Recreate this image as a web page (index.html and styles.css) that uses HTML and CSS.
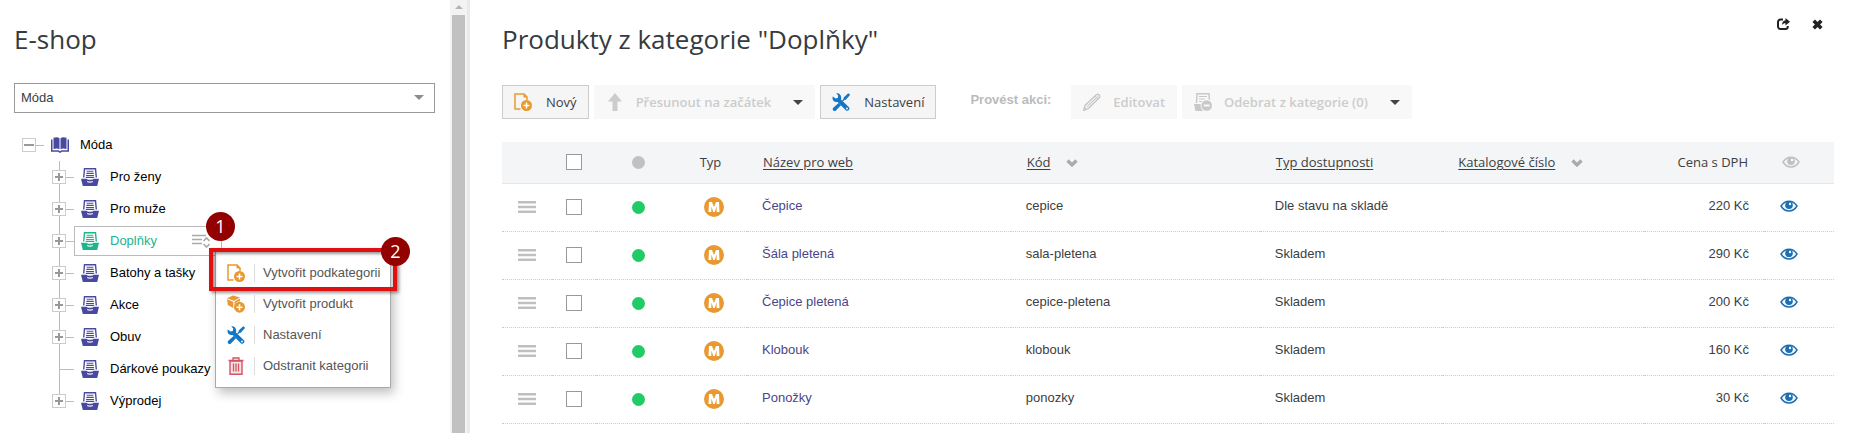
FILE: index.html
```html
<!DOCTYPE html>
<html lang="cs">
<head>
<meta charset="utf-8">
<title>E-shop</title>
<link rel="stylesheet" href="styles.css">
</head>
<body>
<svg class="defs" aria-hidden="true">
  <symbol id="i-new" viewBox="0 0 18 18"><path d="M6.500 16H1V1h9l3 3v3" fill="none" stroke="#e8992f" stroke-width="1.500"/><path d="M9.500.5v4h4z" fill="#e8992f"/><circle cx="12.500" cy="12.500" r="5.500" fill="#e8992f"/><path d="M12.500 9.500v6M9.500 12.500h6" stroke="#fff" stroke-width="1.500"/></symbol>
  <symbol id="i-box" viewBox="0 0 18 18"><path d="M0 3.200 6 .5l7 2-6 3.200z M0 4.300l6.300 2.400v6.300L.8 10z M7.500 6.500 13 3.600v2.600a6 6 0 0 0-5.500 4z" fill="#e8992f"/><circle cx="12.500" cy="12.200" r="5.500" fill="#e8992f"/><path d="M12.500 9.200v6M9.500 12.200h6" stroke="#fff" stroke-width="1.500"/></symbol>
  <symbol id="i-tools" viewBox="0 0 18 18"><path d="M4.200.3 6.200 2.600 5.800 5 3.600 5.400.8 3.600C-.4 7 2.400 9.800 5.600 8.900l8.200 8.300c2 1.600 4.800-.8 3.200-3L9 6.500C10 2.300 7.400-.4 4.200.3z" fill="#1277c8"/><path d="M17.400 1 16.200.2l-4.500 4.300-.2 1.400L10 7.200l1 1 1.400-1.300 1.400-.2L18 2z M6.600 10 1.300 14.800a1.800 1.800 0 0 0 2.600 2.600L9 12.300z" fill="#1277c8"/><circle cx="15" cy="15.500" r=".9" fill="#fff"/></symbol>
  <symbol id="i-trash" viewBox="0 0 16 18"><path d="M2 4h12v13.200H2z" fill="#fbe3e5" stroke="#cf5560" stroke-width="1.400"/><path d="M.5 3.500h15M5 3V1h6v2M5.500 6.500v8M8 6.500v8M10.500 6.500v8" fill="none" stroke="#cf5560" stroke-width="1.300"/></symbol>
  <symbol id="i-drawer" viewBox="0 0 18 18"><path d="M2.700 9.500 3.500.7h11l.8 8.800" fill="none" stroke="currentColor" stroke-width="1.400"/><path d="M5.600 3.200h6.800M5.300 5.400h7.400M5 7.600h8M4.800 9.500h8.400" stroke="currentColor" stroke-width="1.100"/><path d="M0 10.800h5.500c.5 1.400 6.500 1.400 7 0H18L16.200 18H1.800z" fill="currentColor"/><path d="M6.200 13.400c1.600.8 4 .8 5.600 0" fill="none" stroke="#fff" stroke-width="1.100"/></symbol>
  <symbol id="i-book" viewBox="0 0 18 16"><path d="M0 2.500h1.500v10.700h6l1.500 1 1.500-1h6V2.500H18v12.200h-7L9 16l-2-1.300H0z" fill="#4a49a0"/><path d="M2.500.8C5 0 7 0 8.500 1.200v11C7 11.200 5 11.200 2.500 12z M15.500.8C13 0 11 0 9.500 1.200v11c1.500-1 3.500-1 6-.2z" fill="#4a49a0"/></symbol>
  <symbol id="i-sort" viewBox="0 0 18 14"><path d="M0 1.500h14M0 5.500h10M0 9.500h10" stroke="#aaa" stroke-width="1.500"/><path d="m11.500 7 3-3 3 3M11.500 10l3 3 3-3" fill="none" stroke="#aaa" stroke-width="1.700"/></symbol>
  <symbol id="i-up" viewBox="0 0 14 18"><path d="M7 0 14 8.500H9.500V18h-5V8.500H0z" fill="#ccc"/></symbol>
  <symbol id="i-pencil" viewBox="0 0 18 18"><path d="M.8 17.200 2 12.400 13.500 1.500c1.500-1.200 4.200 1 3 3L5.500 15.500z" fill="#ececec" stroke="#c6c6c6" stroke-width="1.300"/><path d="M4.500 13.500 14.500 3.500M12 3l3 3" stroke="#c6c6c6"/><path d="M.3 17.700l1-3.700 2.700 2.700z" fill="#c6c6c6"/></symbol>
  <symbol id="i-remove" viewBox="0 0 18 18"><path d="M2.500 10 3 .8h12l.4 6" fill="none" stroke="#c8c8c8" stroke-width="1.500"/><path d="M5 3.500h8M5 6h6M5 8.500h3" stroke="#c8c8c8" stroke-width="1.200"/><path d="M0 11h6.500c0 3 .5 5 2.500 7H1.500z" fill="#c8c8c8"/><circle cx="12.700" cy="12.500" r="5.300" fill="#c8c8c8"/><path d="M9.800 12.500h5.800" stroke="#fff" stroke-width="1.800"/></symbol>
  <symbol id="i-share" viewBox="0 0 13 12"><path d="M6 1.500H3.500a2.500 2.500 0 0 0-2.500 2.500v4.500A2.500 2.500 0 0 0 3.500 11h4.800a2.500 2.500 0 0 0 2.500-2.500V8" fill="none" stroke="#222" stroke-width="2"/><path d="M8.500 0 13 3.800 8.500 7.400V5.200C6.800 5.200 5.800 5.800 5 7.200 5 4.200 6.300 2.400 8.500 2.200z" fill="#222"/></symbol>
  <symbol id="i-close" viewBox="0 0 11 11"><path d="m1.700 1.700 7.600 7.600M9.300 1.700 1.700 9.300" stroke="#222" stroke-width="3.600"/></symbol>
  <symbol id="i-chev" viewBox="0 0 12 8"><path d="m1.500 1.500 4.500 4.500 4.500-4.500" fill="none" stroke="#aaa" stroke-width="3.200"/></symbol>
  <symbol id="i-eye" viewBox="0 0 18 12"><path d="M1 6c4-6.500 12-6.500 16 0-4 6.500-12 6.500-16 0z" fill="none" stroke="currentColor" stroke-width="1.500"/><circle cx="9" cy="5.300" r="3.800" fill="currentColor"/><circle cx="10" cy="4" r="1.200" fill="#fff"/></symbol>
  <symbol id="i-drag" viewBox="0 0 18 12"><path d="M0 1.200h18M0 6h18M0 10.800h18" stroke="#bfbfbf" stroke-width="2.400"/></symbol>
  <symbol id="i-m" viewBox="0 0 20 20"><circle cx="10" cy="10" r="10" fill="#e8992f"/><path d="M4.500 15 5 5h3l2 5 2-5h3l.5 10h-2.800l-.2-5.500L10.800 15H9.200L7.500 9.500 7.300 15z" fill="#fff"/></symbol>
  <symbol id="i-caret" viewBox="0 0 10 5"><path d="M0 0h10L5 5z" fill="currentColor"/></symbol>
</svg>
<div class="app">
  <aside class="sidebar">
    <div class="side-content">
      <h1 class="title">E-shop</h1>
      <div class="picker">
        <select class="shop-select" aria-label="E-shop"><option>Móda</option></select>
        <svg class="picker-caret"><use href="#i-caret"/></svg>
      </div>
      <div class="tree">
        <div class="node"><button class="toggle minus" aria-label="Sbalit"></button><span class="link-line"></span><a class="label root" href="#"><svg class="ic-book"><use href="#i-book"/></svg>Móda</a></div>
        <div class="branch">
          <div class="node"><button class="toggle" aria-label="Rozbalit"></button><span class="link-line"></span><a class="label" href="#"><svg class="ic"><use href="#i-drawer"/></svg>Pro ženy</a></div>
          <div class="node"><button class="toggle" aria-label="Rozbalit"></button><span class="link-line"></span><a class="label" href="#"><svg class="ic"><use href="#i-drawer"/></svg>Pro muže</a></div>
          <div class="node"><button class="toggle" aria-label="Rozbalit"></button><span class="link-line"></span>
            <div class="selected">
              <a class="label" href="#"><svg class="ic"><use href="#i-drawer"/></svg>Doplňky</a>
              <svg class="ic-sort"><use href="#i-sort"/></svg>
              <span class="badge badge-one">1</span>
              <div class="menu">
                <button class="item"><span class="item-icon"><svg class="ic"><use href="#i-new"/></svg></span>Vytvořit podkategorii</button>
                <button class="item"><span class="item-icon"><svg class="ic"><use href="#i-box"/></svg></span>Vytvořit produkt</button>
                <button class="item"><span class="item-icon"><svg class="ic"><use href="#i-tools"/></svg></span>Nastavení</button>
                <button class="item"><span class="item-icon"><svg class="ic"><use href="#i-trash"/></svg></span>Odstranit kategorii</button>
                <span class="highlight"></span>
                <span class="badge badge-two">2</span>
              </div>
            </div>
          </div>
          <div class="node"><button class="toggle" aria-label="Rozbalit"></button><span class="link-line"></span><a class="label" href="#"><svg class="ic"><use href="#i-drawer"/></svg>Batohy a tašky</a></div>
          <div class="node"><button class="toggle" aria-label="Rozbalit"></button><span class="link-line"></span><a class="label" href="#"><svg class="ic"><use href="#i-drawer"/></svg>Akce</a></div>
          <div class="node"><button class="toggle" aria-label="Rozbalit"></button><span class="link-line"></span><a class="label" href="#"><svg class="ic"><use href="#i-drawer"/></svg>Obuv</a></div>
          <div class="node"><span class="leaf-line"></span><a class="label" href="#"><svg class="ic"><use href="#i-drawer"/></svg>Dárkové poukazy</a></div>
          <div class="node"><button class="toggle" aria-label="Rozbalit"></button><span class="link-line"></span><a class="label" href="#"><svg class="ic"><use href="#i-drawer"/></svg>Výprodej</a></div>
        </div>
      </div>
    </div>
    <div class="scrollbar"><svg class="scroll-arrow" viewBox="0 0 8 4"><path d="M0 4h8L4 0z" fill="#b5b5b5"/></svg><div class="thumb"></div></div>
  </aside>
  <main class="main">
    <div class="head">
      <h1 class="title">Produkty z kategorie "Doplňky"</h1>
      <div class="window-actions">
        <button class="plain" aria-label="Otevřít v novém okně"><svg class="ic-share"><use href="#i-share"/></svg></button>
        <button class="plain" aria-label="Zavřít"><svg class="ic-close"><use href="#i-close"/></svg></button>
      </div>
    </div>
    <div class="toolbar">
      <button class="btn"><svg class="ic"><use href="#i-new"/></svg>Nový</button>
      <button class="btn off"><svg class="ic"><use href="#i-up"/></svg>Přesunout na začátek<svg class="caret"><use href="#i-caret"/></svg></button>
      <button class="btn"><svg class="ic"><use href="#i-tools"/></svg>Nastavení</button>
      <span class="bulk">Provést akci:</span>
      <button class="btn off"><svg class="ic"><use href="#i-pencil"/></svg>Editovat</button>
      <button class="btn off"><svg class="ic"><use href="#i-remove"/></svg>Odebrat z kategorie (0)<svg class="caret"><use href="#i-caret"/></svg></button>
    </div>
    <table class="grid">
      <colgroup><col class="c-drag"><col class="c-check"><col class="c-status"><col class="c-type"><col class="c-name"><col class="c-code"><col class="c-avail"><col><col class="c-price"><col class="c-eye"></colgroup>
      <thead><tr>
        <th></th><th class="mid"><input type="checkbox" class="check" aria-label="Vybrat vše"></th><th class="mid"><span class="dot gray"></span></th><th class="mid type-head">Typ</th>
        <th><a href="#">Název pro web</a></th><th><a href="#">Kód</a><svg class="chev"><use href="#i-chev"/></svg></th><th><a href="#">Typ dostupnosti</a></th><th><a href="#">Katalogové číslo</a><svg class="chev"><use href="#i-chev"/></svg></th><th class="num">Cena s DPH</th><th class="eye-head"><svg class="eye muted"><use href="#i-eye"/></svg></th>
      </tr></thead>
      <tbody>
        <tr><td class="mid"><svg class="drag"><use href="#i-drag"/></svg></td><td class="mid"><input type="checkbox" class="check" aria-label="Čepice"></td><td class="mid"><span class="dot"></span></td><td class="mid"><svg class="m"><use href="#i-m"/></svg></td><td><a href="#">Čepice</a></td><td>cepice</td><td>Dle stavu na skladě</td><td></td><td class="num">220 Kč</td><td class="eye-cell"><svg class="eye"><use href="#i-eye"/></svg></td></tr>
        <tr><td class="mid"><svg class="drag"><use href="#i-drag"/></svg></td><td class="mid"><input type="checkbox" class="check" aria-label="Šála pletená"></td><td class="mid"><span class="dot"></span></td><td class="mid"><svg class="m"><use href="#i-m"/></svg></td><td><a href="#">Šála pletená</a></td><td>sala-pletena</td><td>Skladem</td><td></td><td class="num">290 Kč</td><td class="eye-cell"><svg class="eye"><use href="#i-eye"/></svg></td></tr>
        <tr><td class="mid"><svg class="drag"><use href="#i-drag"/></svg></td><td class="mid"><input type="checkbox" class="check" aria-label="Čepice pletená"></td><td class="mid"><span class="dot"></span></td><td class="mid"><svg class="m"><use href="#i-m"/></svg></td><td><a href="#">Čepice pletená</a></td><td>cepice-pletena</td><td>Skladem</td><td></td><td class="num">200 Kč</td><td class="eye-cell"><svg class="eye"><use href="#i-eye"/></svg></td></tr>
        <tr><td class="mid"><svg class="drag"><use href="#i-drag"/></svg></td><td class="mid"><input type="checkbox" class="check" aria-label="Klobouk"></td><td class="mid"><span class="dot"></span></td><td class="mid"><svg class="m"><use href="#i-m"/></svg></td><td><a href="#">Klobouk</a></td><td>klobouk</td><td>Skladem</td><td></td><td class="num">160 Kč</td><td class="eye-cell"><svg class="eye"><use href="#i-eye"/></svg></td></tr>
        <tr><td class="mid"><svg class="drag"><use href="#i-drag"/></svg></td><td class="mid"><input type="checkbox" class="check" aria-label="Ponožky"></td><td class="mid"><span class="dot"></span></td><td class="mid"><svg class="m"><use href="#i-m"/></svg></td><td><a href="#">Ponožky</a></td><td>ponozky</td><td>Skladem</td><td></td><td class="num">30 Kč</td><td class="eye-cell"><svg class="eye"><use href="#i-eye"/></svg></td></tr>
      </tbody>
    </table>
  </main>
</div>
</body>
</html>
```
FILE: styles.css
```css
* { box-sizing: border-box; }
body { margin: 0; background: #fff; color: #3c4043; font: 13px/16px "Liberation Sans", Arial, sans-serif; }
svg { display: block; flex: none; }
a { color: inherit; text-decoration: none; }
button { font: inherit; color: inherit; margin: 0; }
.defs { position: absolute; width: 0; height: 0; }

.app { display: flex; min-height: 100vh; }
.sidebar { display: flex; width: 470px; flex: none; border-right: 3px solid #eaeaea; }
.side-content { flex: 1; padding: 19px 15px 12px 14px; }
.title { margin: 0; font: 400 26px/40px "Open Sans", "Noto Sans", sans-serif; color: #363b40; }

.picker { position: relative; margin-top: 24px; }
.shop-select { appearance: none; display: block; width: 100%; height: 30px; padding: 0 6px; border: 1px solid #999; border-radius: 0; background: #fff; color: #3c4043; font: inherit; }
.picker-caret { position: absolute; right: 11px; top: 12px; width: 10px; height: 5px; color: #8c8c8c; pointer-events: none; }

.tree { margin-top: 16px; padding-left: 8px; color: #000; }
.node { display: flex; align-items: center; height: 32px; }
.toggle { width: 14px; height: 14px; padding: 0; flex: none; border: 1px solid #ccc; background: linear-gradient(#999, #999) center / 8px 2px no-repeat, linear-gradient(#999, #999) center / 2px 8px no-repeat, #fff; }
.toggle.minus { background: linear-gradient(#999, #999) center / 10px 2px no-repeat, #fff; }
.link-line { width: 8px; height: 1px; background: #bbb; }
.leaf-line { width: 15px; height: 1px; margin-left: 7px; background: #bbb; }
.branch { padding-left: 30px; background: linear-gradient(#bbb, #bbb) 37px 0 / 1px 240px no-repeat; }
.label { display: flex; align-items: center; gap: 11px; padding-left: 7px; }
.branch .ic { color: #4a49a0; }
.ic { width: 18px; height: 18px; }
.ic-book { width: 18px; height: 16px; }
.selected { position: relative; display: flex; align-items: center; justify-content: space-between; width: 148px; height: 30px; padding-right: 11px; border: 1px solid #bbb; color: #21b38c; }
.selected .label { padding-left: 6px; }
.selected .label .ic { color: #21b38c; }
.ic-sort { width: 18px; height: 14px; }

.badge { position: absolute; width: 29px; height: 29px; border-radius: 50%; background: #920000; color: #fff; font: 18px/29px "Open Sans", sans-serif; text-align: center; }
.badge-one { right: -14px; top: -15px; }
.badge-two { right: -20px; top: -15px; }
.menu { position: absolute; z-index: 1; left: 140px; top: 24px; width: 176px; padding: 5px 0 6px; border: 1px solid #aaa; background: #fff; box-shadow: 3px 5px 10px rgba(0, 0, 0, .25); color: #555; }
.item { display: flex; align-items: center; width: 100%; height: 31px; padding: 0 0 0 11px; border: 0; background: none; white-space: nowrap; text-align: left; }
.item-icon { width: 28px; margin-right: 8px; border-right: 1px solid #ddd; }
.highlight { position: absolute; left: -7px; right: -7px; top: -4px; height: 43px; border: 4px solid #e01010; box-shadow: 2px 2px 3px rgba(0, 0, 0, .4), inset 2px 2px 3px rgba(0, 0, 0, .4); pointer-events: none; }

.scrollbar { display: flex; flex-direction: column; align-items: center; width: 17px; background: #f3f3f3; }
.scroll-arrow { width: 8px; height: 4px; margin: 5px 0 6px; }
.thumb { flex: 1; width: 13px; background: #c1c1c1; }

.main { flex: 1; min-width: 0; padding: 0 23px 0 32px; }
.head { display: flex; justify-content: space-between; padding-top: 19px; }
.window-actions { display: flex; align-items: center; gap: 22px; height: 10px; margin-right: 11px; }
.plain { padding: 0; border: 0; background: none; }
.ic-share { width: 13px; height: 12px; }
.ic-close { width: 11px; height: 11px; }

.toolbar { display: flex; gap: 5px; margin-top: 26px; font: 500 13px/16px "Open Sans", "Noto Sans", sans-serif; }
.btn { display: flex; align-items: center; gap: 14px; height: 34px; padding: 0 11px; border: 1px solid #ccc; background: #f5f5f5; white-space: nowrap; }
.btn.off { gap: 12px; padding: 0 11px; border-color: #f8f8f8; background: #f8f8f8; color: #ccc; font-weight: 600; }
.caret { width: 10px; height: 5px; margin-left: 10px; color: #444; }
.bulk { margin: 7px 15px 0 29px; color: #bbb; font: 700 13px/16px "Liberation Sans", Arial, sans-serif; }

.grid { width: 100%; margin-top: 23px; table-layout: fixed; border-collapse: collapse; }
.c-drag { width: 50px; }
.c-check { width: 44px; }
.c-status { width: 84px; }
.c-type { width: 67px; }
.c-name { width: 19.8%; }
.c-code { width: 18.7%; }
.c-avail { width: 13.7%; }
.c-price { width: 120px; }
.c-eye { width: 70px; }
th { height: 41px; padding: 0 16px; border-bottom: 1px solid #e4e6e8; background: #f3f5f7; font: 500 13px/16px "Open Sans", "Noto Sans", sans-serif; text-align: left; white-space: nowrap; }
th a { text-decoration: underline; text-underline-offset: 2px; }
td { height: 48px; padding: 0 15px 2px; border-bottom: 1px dotted #ccc; white-space: nowrap; }
td a { color: #4a4588; }
.mid { padding: 0; text-align: center; }
.type-head { padding-right: 6px; }
.eye-head { padding-left: 18px; }
.eye-cell { padding-left: 16px; }
.num { text-align: right; }
.check { appearance: none; display: block; width: 16px; height: 16px; margin: 0 auto; border: 1px solid #999; background: #fff; }
.dot { display: block; width: 13px; height: 13px; margin: 0 auto; border-radius: 50%; background: #1fcc66; }
.dot.gray { background: #bfc1c3; }
.m { width: 20px; height: 20px; margin: 0 auto; }
.drag { width: 18px; height: 12px; margin: 0 auto; }
.chev { display: inline-block; width: 12px; height: 8px; margin-left: 16px; }
.eye { width: 18px; height: 12px; color: #1b6fb5; }
.eye.muted { color: #bfc1c3; }
```
